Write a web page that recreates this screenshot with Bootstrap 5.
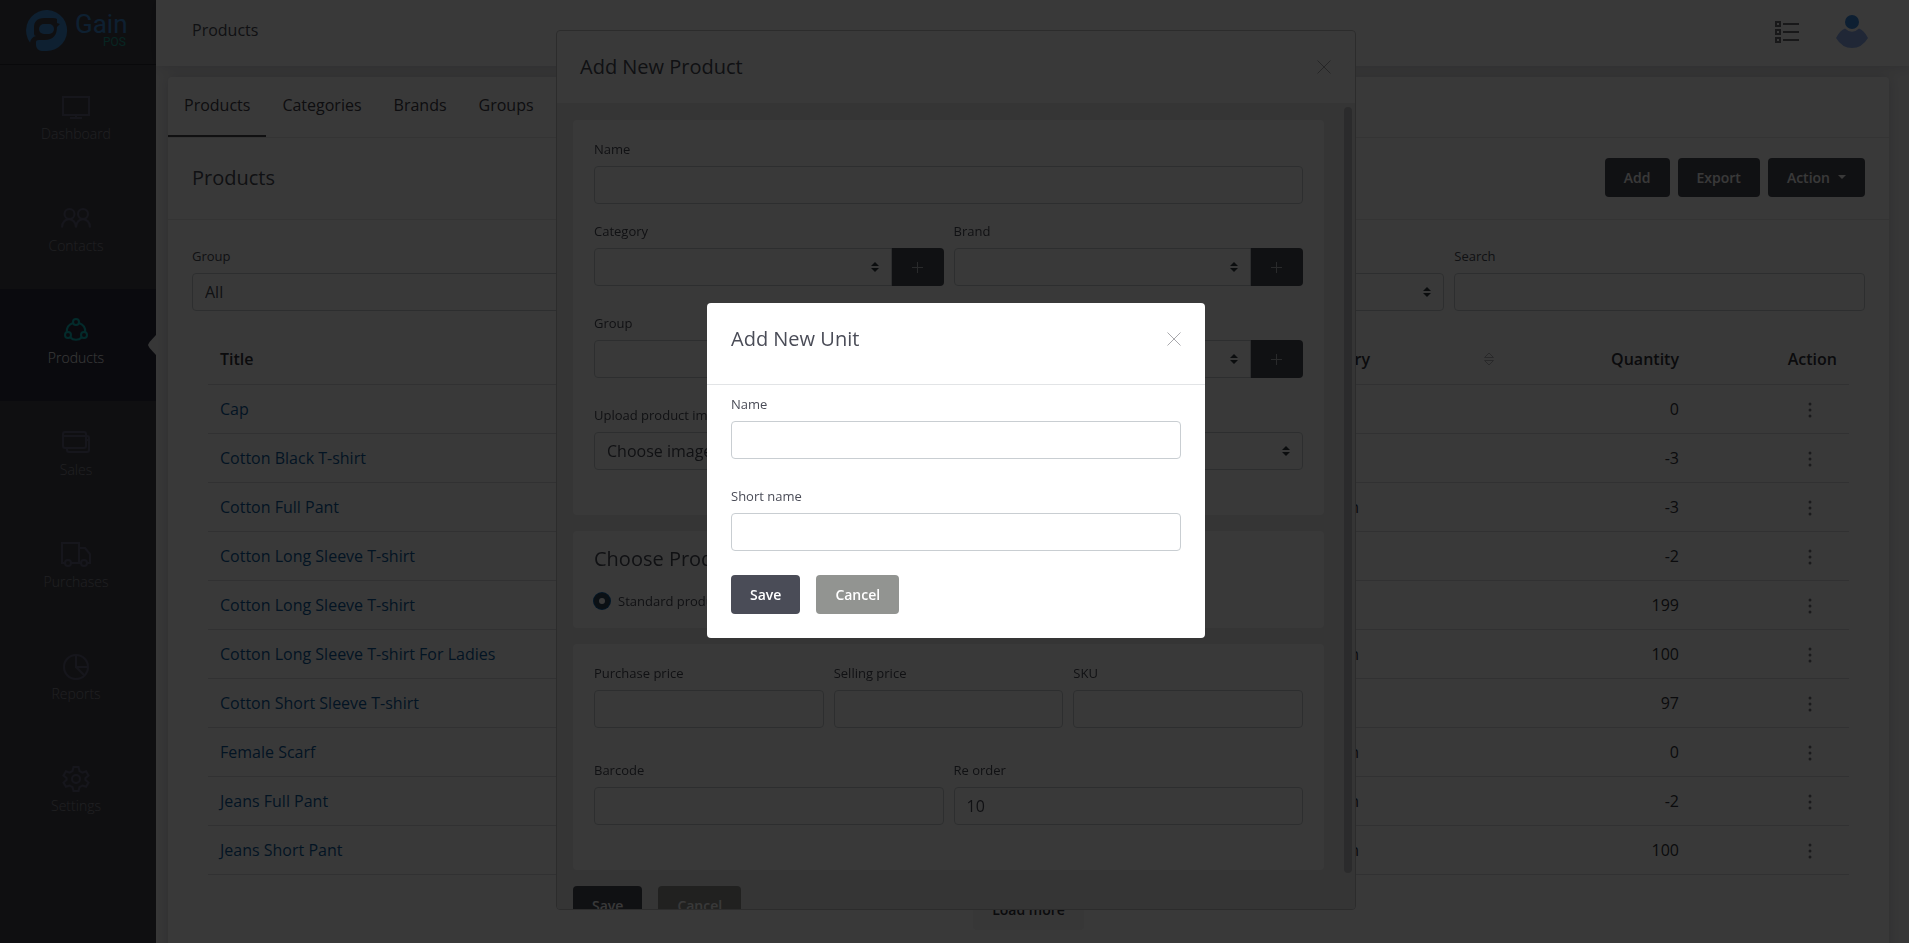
<!DOCTYPE html>
<html lang="en">
<head>
<meta charset="utf-8">
<meta name="viewport" content="width=device-width, initial-scale=1">
<title>Gain POS - Products</title>
<link href="https://cdn.jsdelivr.net/npm/bootstrap@5.3.0/dist/css/bootstrap.min.css" rel="stylesheet">
<style>
:root{--ink:#4a4c57;--line:#e6e6e9;--field:#c9ced2}
body{font-family:"Open Sans",sans-serif;font-size:16px;line-height:24px;color:var(--ink);background:#f5f5f6;overflow:hidden}
.app-shell{min-height:100vh}
/* sidebar */
.side{width:156px;flex:none;background:#46464e}
.brand-link{height:65px;border-bottom:1px solid #2c2c33}
.side-link{height:112px;padding:28px 4px 0 0;color:#8e8e9a;font-size:14px;line-height:20px;font-weight:300;text-decoration:none;position:relative;text-align:center;display:block}
.side-link svg{display:block;margin:0 auto 3px;stroke:#62627e;fill:none;stroke-width:2}
.side-link.current{background:#2f2f42;color:#fff}
.side-link.current svg{stroke:#10bfc0}
.side-link.current::after{content:"";position:absolute;right:0;top:46px;width:8px;height:20px;background:#f5f5f6;clip-path:polygon(100% 0,20% 35%,0 50%,20% 65%,100% 100%)}
/* page */
.topbar{height:66px;background:#fff;padding:0 41px 6px 36px;box-shadow:0 0 14px rgba(0,0,40,.16)}
.tools{gap:37px;padding-top:4px}
.panel{background:#fff;border-radius:4px;margin:11px 20px 0 12px;padding-bottom:28px;box-shadow:0 0 14px rgba(0,0,40,.16)}
.tabs{height:61px;border-bottom:1px solid var(--line)}
.tabs a{color:#3f4048;text-decoration:none;padding:16px 16px 0;height:60px}
.tabs a.current{border-bottom:2px solid #4a4a4f}
.panel-head{height:82px;border-bottom:1px solid var(--line);padding:0 24px 2px}
.heading{font-size:20px;line-height:28px;font-weight:400;margin:0;color:var(--ink)}
.act{height:39px;padding:0 19px;font-size:14px;font-weight:600;line-height:20px;color:#fff;border:0;border-radius:4px;background:var(--ink)}
.act.muted{background:#929491}
.act.pale{background:#f3f3f4;color:#32333a}
.act.dropdown-toggle::after{margin-left:8px}
.filters{padding:27px 24px 0}
.gap-cols{gap:10px}
label.cap{display:block;font-size:13px;line-height:18px;margin-bottom:8px;color:var(--ink)}
.form-control,.form-select{height:38px;border:1px solid var(--field);border-radius:4px;padding:0 12px;font-size:16px;color:var(--ink);background-color:#fff;box-shadow:none}
.form-select{background-image:url("data:image/svg+xml,%3csvg xmlns='http://www.w3.org/2000/svg' viewBox='0 0 4 5'%3e%3cpath fill='%23343a40' d='M2 0L0 2h4zm0 5L0 3h4z'/%3e%3c/svg%3e");background-size:8px 10px;background-position:right 12px center}
.plus{width:53px;border:0;background:var(--ink);border-radius:0 4px 4px 0}
.plus svg{display:block;margin:0 auto}
.list-wrap{padding:24px 40px 0}
.goods{table-layout:fixed;margin:0;--bs-table-bg:transparent;--bs-table-color:#32333a}
.goods th,.goods td{height:49px;padding:0 12px;vertical-align:middle;border-bottom:1px solid #d9dadd}
.goods th{font-weight:600;color:#32333a}
.goods a{color:#0f5c9c;text-decoration:none}
.goods .dots{border:0;background:none;padding:5px 25px 0;line-height:0}
.c-title{width:30%}.c-cat{width:218px}.c-qty{width:184px}.c-act{width:158px}
/* dialogs */
.modal{padding:0 0 2px 3px}
.modal-content{border:0;border-radius:4px;color:var(--ink)}
.x{border:0;background:none;padding:0;line-height:0}
.field-row{margin-top:28px}
.wide-row{margin-top:33px}
.tight-row{margin-top:18px}
.kind{margin-top:19px}
#productModal{z-index:1040}
#productModal .modal-dialog{max-width:800px;margin:30px auto 0}
#productModal .modal-content{height:calc(100vh - 63px);border:1px solid #c4c4c6;overflow:hidden}
#productModal .modal-header{height:72px;padding:0 23px;border:0;background:#fff}
.scroll-area{background:#ebebec;overflow:hidden;padding:17px 0 0 16px}
.scroll-main{width:751px;flex:0 1 751px}
.scroll-thumb{width:8px;height:766px;border-radius:4px;background:#c1c1c3;margin:-13px 3px 0 auto}
.sheet{background:#fff;border-radius:4px;padding:20px 21px 45px;margin-bottom:16px}
.sheet-short{padding:14px 21px 18px}
.form-check-input.dot{width:16px;height:16px;margin:0;border:5px solid #31485c;background:#fff!important;box-shadow:0 0 0 1px #0b62a8}
.modal-backdrop.veil{z-index:1045;background:#000;opacity:.775}
#unitModal .modal-dialog{max-width:498px}
#unitModal .modal-header{height:82px;padding:0 23px 9px 24px;border-bottom:1px solid #e2e4e6}
#unitModal .modal-body{padding:10px 24px 24px}
</style>
</head>
<body>
<div class="app-shell d-flex">
  <nav class="side" aria-label="Main">
    <a class="brand-link d-block" href="#">
      <svg width="156" height="64" viewBox="0 0 156 64" role="img" aria-label="Gain POS">
        <path d="M30 42.500A20.500 20.500 0 1 1 46 51H42A6 6 0 0 1 36 45V42Q36 40 39 40H45C53 40 57 35 57 27L60 24L57 23V19Q56 18 53 18H44C37 18 34 22 34 27V34Q34 36 36 36Q31 37 30 42.500Z" fill="#3f8fdb"/>
        <rect x="39" y="24" width="15" height="10" rx="5" fill="#3f8fdb"/>
        <text x="75" y="33" font-family="Roboto,sans-serif" font-size="26" fill="#3f8fdb">Gain</text>
        <text x="103" y="46" font-family="Roboto,sans-serif" font-size="12" fill="#1fa597">POS</text>
      </svg>
    </a>
    <a class="side-link" href="#"><svg width="28" height="28" viewBox="0 0 28 28"><path d="M1 4h26v18H1zM14 22v3M8 25h12"/></svg>Dashboard</a>
    <a class="side-link" href="#"><svg width="30" height="28" viewBox="0 0 30 28"><circle cx="8.500" cy="9" r="5"/><circle cx="22" cy="9" r="5"/><path d="M1 22.500C1 11.500 15 11.500 15 22.500C15 11.500 29 11.500 29 22.500"/></svg>Contacts</a>
    <a class="side-link current" href="#" aria-current="page"><svg width="28" height="28" viewBox="0 0 28 28"><circle cx="14" cy="5" r="3"/><circle cx="6" cy="18" r="3"/><circle cx="22" cy="18" r="3"/><path d="M11 6C7 7.500 4.500 11 4.800 15M17 6C21 7.500 23.500 11 23.200 15M8.500 20.500C11 23.500 17 23.500 19.500 20.500"/></svg>Products</a>
    <a class="side-link" href="#"><svg width="28" height="28" viewBox="0 0 28 28"><rect x="1" y="3" width="23" height="16" rx="2"/><path d="M1 7h23M5 19v2q0 2 2 2h18q2 0 2-2V9q0-2-2-2M24 11h3"/></svg>Sales</a>
    <a class="side-link" href="#"><svg width="30" height="28" viewBox="0 0 30 28"><path d="M4 22H1V2h17v20M10 22h10M18 7h6l5 6v9h-3"/><circle cx="7" cy="22" r="3"/><circle cx="23" cy="22" r="3"/></svg>Purchases</a>
    <a class="side-link" href="#"><svg width="28" height="28" viewBox="0 0 28 28"><circle cx="14" cy="14" r="12"/><path d="M14 2v12h12M14 14l8 8"/></svg>Reports</a>
    <a class="side-link" href="#"><svg width="28" height="28" viewBox="0 0 28 28"><circle cx="14" cy="14" r="4"/><path d="M11.500 2h5l1 4 3 1.700 3.500-1.400 2.500 4.300-3 2.400v2l3 2.600-2.500 4.200-3.500-1.300-3 1.700-1 3.800h-5l-1-3.800-3-1.700L4 21.800l-2.500-4.200 3-2.600v-2l-3-2.400L4 6.300l3.500 1.400 3-1.700z"/></svg>Settings</a>
  </nav>

  <div class="flex-grow-1">
    <header class="topbar d-flex align-items-center justify-content-between">
      <span>Products</span>
      <div class="tools d-flex align-items-center">
        <button class="x" type="button" aria-label="Activity"><svg width="24" height="24" viewBox="0 0 24 24" fill="none" stroke="#6c6c72" stroke-width="2"><path d="M1 2h4v4H1zM1 10h4v4H1zM1 18h4v4H1zM8 4h16M8 12h16M8 20h16"/></svg></button>
        <button class="x" type="button" aria-label="Account"><svg width="32" height="34" viewBox="0 0 32 34"><path d="M0 23Q4 15 9 13.500Q16 20 23 13.500Q28 15 32 23Q26 33 16 33Q6 33 0 23Z" fill="#8fb0f0"/><circle cx="16" cy="7" r="7" fill="#3a8be0"/></svg></button>
      </div>
    </header>

    <main class="panel">
      <div class="tabs d-flex">
        <a class="current" href="#">Products</a><a href="#">Categories</a><a href="#">Brands</a><a href="#">Groups</a>
      </div>
      <div class="panel-head d-flex align-items-center justify-content-between">
        <h1 class="heading">Products</h1>
        <div class="d-flex gap-2">
          <button class="act" type="button">Add</button>
          <button class="act" type="button">Export</button>
          <button class="act dropdown-toggle" type="button">Action</button>
        </div>
      </div>
      <div class="filters d-flex gap-cols">
        <div class="col"><label class="cap" for="fGroup">Group</label><select class="form-select" id="fGroup"><option>All</option></select></div>
        <div class="col"><label class="cap" for="fBrand">Brand</label><select class="form-select" id="fBrand"><option>All</option></select></div>
        <div class="col"><label class="cap" for="fCat">Category</label><select class="form-select" id="fCat"><option>All</option></select></div>
        <div class="col"><label class="cap" for="fSearch">Search</label><input class="form-control" id="fSearch" type="text"></div>
      </div>
      <div class="list-wrap">
        <table class="table goods">
          <thead><tr>
            <th class="c-title">Title</th><th></th>
            <th class="c-cat"><div class="d-flex justify-content-between align-items-center">Category<svg width="12" height="14" viewBox="0 0 12 14" fill="none" stroke="#b8b8bc"><path d="M1.500 5.500h9L6 1zM1.500 8.500h9L6 13z"/></svg></div></th>
            <th class="c-qty text-end">Quantity</th><th class="c-act text-end">Action</th>
          </tr></thead>
          <tbody id="rows"></tbody>
        </table>
      </div>
      <div class="text-center pt-3"><button class="act pale" type="button">Load more</button></div>
    </main>
  </div>
</div>

<div class="modal d-block overflow-hidden" id="productModal" tabindex="-1" aria-labelledby="pTitle">
  <div class="modal-dialog">
    <div class="modal-content">
      <div class="modal-header d-flex justify-content-between">
        <h2 class="heading" id="pTitle">Add New Product</h2>
        <button class="x" type="button" aria-label="Close"><svg width="16" height="16" viewBox="0 0 16 16" stroke="#a9a9ad"><path d="M1.500 1.500l13 13M14.500 1.500l-13 13"/></svg></button>
      </div>
      <div class="scroll-area d-flex flex-grow-1">
        <form class="scroll-main">
          <div class="sheet">
            <label class="cap" for="pName">Name</label><input class="form-control" id="pName" type="text">
            <div class="d-flex gap-cols tight-row">
              <div class="col"><label class="cap" for="pCat">Category</label><div class="input-group"><select class="form-select" id="pCat"></select><button class="plus" type="button" aria-label="Add category"><svg width="11" height="11" viewBox="0 0 11 11" stroke="#b9bac0"><path d="M5.500 0v11M0 5.500h11"/></svg></button></div></div>
              <div class="col"><label class="cap" for="pBrand">Brand</label><div class="input-group"><select class="form-select" id="pBrand"></select><button class="plus" type="button" aria-label="Add brand"><svg width="11" height="11" viewBox="0 0 11 11" stroke="#b9bac0"><path d="M5.500 0v11M0 5.500h11"/></svg></button></div></div>
            </div>
            <div class="d-flex gap-cols field-row">
              <div class="col"><label class="cap" for="pGroup">Group</label><div class="input-group"><select class="form-select" id="pGroup"></select><button class="plus" type="button" aria-label="Add group"><svg width="11" height="11" viewBox="0 0 11 11" stroke="#b9bac0"><path d="M5.500 0v11M0 5.500h11"/></svg></button></div></div>
              <div class="col"><label class="cap" for="pUnit">Unit</label><div class="input-group"><select class="form-select" id="pUnit"></select><button class="plus" type="button" aria-label="Add unit"><svg width="11" height="11" viewBox="0 0 11 11" stroke="#b9bac0"><path d="M5.500 0v11M0 5.500h11"/></svg></button></div></div>
            </div>
            <div class="field-row"><label class="cap" for="pImg">Upload product image</label><select class="form-select" id="pImg"><option>Choose image</option></select></div>
          </div>
          <div class="sheet sheet-short">
            <h3 class="heading">Choose Product Type</h3>
            <div class="d-flex align-items-center gap-2 kind"><input class="form-check-input dot" type="radio" id="std" name="kind" checked><label class="cap mb-0" for="std">Standard product</label></div>
          </div>
          <div class="sheet">
            <div class="d-flex gap-cols">
              <div class="col"><label class="cap" for="buy">Purchase price</label><input class="form-control" id="buy" type="text"></div>
              <div class="col"><label class="cap" for="sell">Selling price</label><input class="form-control" id="sell" type="text"></div>
              <div class="col"><label class="cap" for="sku">SKU</label><input class="form-control" id="sku" type="text"></div>
            </div>
            <div class="d-flex gap-cols wide-row">
              <div class="col"><label class="cap" for="bar">Barcode</label><input class="form-control" id="bar" type="text"></div>
              <div class="col"><label class="cap" for="re">Re order</label><input class="form-control" id="re" type="text" value="10"></div>
            </div>
          </div>
          <div class="d-flex gap-3"><button class="act" type="button">Save</button><button class="act muted" type="button">Cancel</button></div>
        </form>
        <div class="scroll-thumb"></div>
      </div>
    </div>
  </div>
</div>
<div class="modal-backdrop veil"></div>
<div class="modal d-block overflow-hidden" id="unitModal" tabindex="-1" role="dialog" aria-labelledby="uTitle">
  <div class="modal-dialog modal-dialog-centered">
    <form class="modal-content">
      <div class="modal-header d-flex justify-content-between">
        <h2 class="heading" id="uTitle">Add New Unit</h2>
        <button class="x" type="button" aria-label="Close"><svg width="16" height="16" viewBox="0 0 16 16" stroke="#a9a9ad"><path d="M1.500 1.500l13 13M14.500 1.500l-13 13"/></svg></button>
      </div>
      <div class="modal-body">
        <label class="cap" for="uName">Name</label><input class="form-control" id="uName" type="text">
        <div class="field-row"><label class="cap" for="uShort">Short name</label><input class="form-control" id="uShort" type="text"></div>
        <div class="d-flex gap-3 pt-4"><button class="act" type="submit">Save</button><button class="act muted" type="button">Cancel</button></div>
      </div>
    </form>
  </div>
</div>
<script src="https://cdn.jsdelivr.net/npm/bootstrap@5.3.0/dist/js/bootstrap.bundle.min.js"></script>
<script>
const goods = [
  ['Cap','Men',0],['Cotton Black T-shirt','Men',-3],['Cotton Full Pant','Women',-3],
  ['Cotton Long Sleeve T-shirt','Men',-2],['Cotton Long Sleeve T-shirt','Men',199],
  ['Cotton Long Sleeve T-shirt For Ladies','Women',100],['Cotton Short Sleeve T-shirt','Men',97],
  ['Female Scarf','Women',0],['Jeans Full Pant','Women',-2],['Jeans Short Pant','Women',100]
];
document.getElementById('rows').innerHTML = goods.map(([t,c,q]) =>
  `<tr><td><a href="#">${t}</a></td><td></td><td>${c}</td><td class="text-end">${q}</td>
   <td class="text-end"><button class="dots" type="button" aria-label="Actions"><svg width="4" height="16" viewBox="0 0 4 16" fill="#77777c"><circle cx="2" cy="2" r="1.500"/><circle cx="2" cy="8" r="1.500"/><circle cx="2" cy="14" r="1.500"/></svg></button></td></tr>`).join('');
</script>
</body>
</html>
